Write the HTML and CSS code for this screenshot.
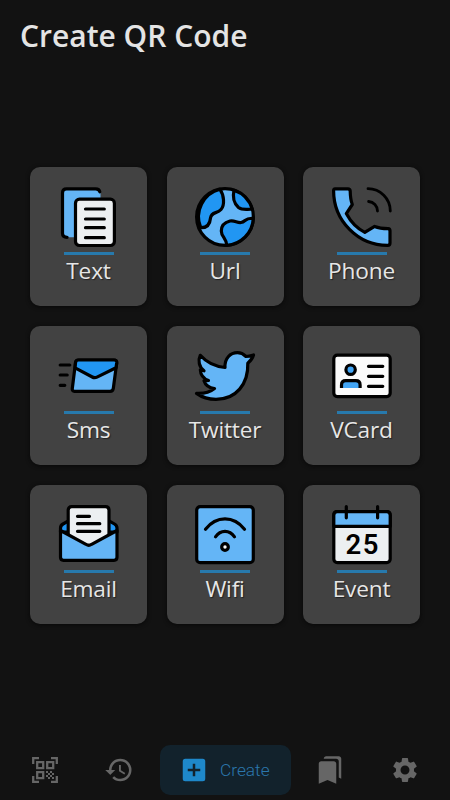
FILE: index.html
```html
<!DOCTYPE html>
<html lang="en">
<head>
<meta charset="utf-8">
<title>Create QR Code</title>
<link rel="stylesheet" href="styles.css">
</head>
<body>
<div class="app">
  <header class="header"><h1 class="title">Create QR Code</h1></header>
  <main class="grid">
    <button class="card">
      <svg class="icon" viewBox="0 0 60 60">
        <path class="light ns" d="M8 1.800h29.500q4 0 4 4v44.500H8.700q-4.600 0-4.600-4V5.800q0-4 3.900-4z"/>
        <path class="none" d="M40.800 4.800q-.5-3-4.200-3H7.500q-4 0-4 4v40.500q0 4 4.600 4"/>
        <rect class="paper" x="16.500" y="12.200" width="38.900" height="46.300" rx="4"/>
        <path d="M26.500 22h18.800M26.500 32h18.800M26.500 40.700h18.800M26.500 50.700h18.800"/>
      </svg>
      <span class="line"></span><span class="label">Text</span>
    </button>
    <button class="card">
      <svg class="icon" viewBox="0 0 60 60">
        <circle class="light" cx="30" cy="30" r="28.400"/>
        <path class="deep" d="M25 2.300C29 8 30 18 26 22.500C22 27 16.500 24.500 15.500 31C15 37 12.500 41 5.700 40.700A28.400 28.400 0 0 1 25 2.300z"/>
        <path class="deep" d="M39 3.200C37.500 10 39 16.500 43.500 20.500C47.500 23.500 51.500 22 57.300 22.300A28.400 28.400 0 0 0 39 3.200z"/>
        <path class="deep" d="M58.300 31.300C49.500 30.500 51 35 46 35.500C42 36 39.500 33 35 34C29 35.500 26.300 39 26.300 44C26.300 50 31.500 51 31.700 58.300A28.400 28.400 0 0 0 58.300 31.300z"/>
      </svg>
      <span class="line"></span><span class="label">Url</span>
    </button>
    <button class="card">
      <svg class="icon" viewBox="0 0 60 60">
        <path class="light" d="M3 1.800H16Q18 1.800 18.200 4C18.300 9 18.500 13 20.300 17.500L14.300 26.600C18.500 34.500 25 41.500 32.800 45.400L42.600 39.400C47 41.200 51.500 41.600 56 41.600Q58 41.800 58 43.800V56Q58 58.400 55.700 58.400C26 58.500 1.600 34 1.600 3.800Q1.600 1.800 3 1.800z"/>
        <path class="none thin" d="M36 1.700A22.300 22.300 0 0 1 58.300 24M36.600 14.500A9.500 9.500 0 0 1 45.500 24"/>
      </svg>
      <span class="line"></span><span class="label">Phone</span>
    </button>
    <button class="card">
      <svg class="icon" viewBox="0 0 60 60">
        <path class="light" d="M19.500 14H55Q58 14 57.700 17L54.300 42.500Q53.900 45.300 51 45.300H15.500Q12.900 45.300 13.300 42.500L16.500 16.800Q16.900 14 19.500 14z"/>
        <path class="deep" d="M19.500 14H55Q58 14 57.700 17L57 21.800L38 31.100Q35.500 32.300 33.300 31L16.100 21.800L16.500 16.800Q16.900 14 19.500 14z"/>
        <path d="M1.200 19h9.600M1.200 29h7M1.200 39.300h4.600"/>
      </svg>
      <span class="line"></span><span class="label">Sms</span>
    </button>
    <button class="card">
      <svg class="icon" viewBox="0 0 60 60">
        <path class="light" d="M5.300 9.300C12 17 20 20.500 30 21.500C29.500 12.500 35 6.700 42.500 6.700C46.500 6.700 49 8.500 51 10.500C53.500 10.500 56 9.800 58.500 9C57.500 12.500 55.500 15 52.800 17.300C53.500 38 41 53.400 21 53.400C13 53.400 6.500 51 1.500 47.400C8 47.800 14.500 46.500 19.500 42.500C14 42 10.500 39.500 9 34.800C10.500 35 12 34.800 13.500 34.500C8 32.500 5.500 28.500 5.300 23.800L9 24.800C4 21 2.800 14.500 5.300 9.300z"/>
      </svg>
      <span class="line"></span><span class="label">Twitter</span>
    </button>
    <button class="card">
      <svg class="icon" viewBox="0 0 60 60">
        <rect class="white" x="1.800" y="9.200" width="56.400" height="41.400" rx="3.500"/>
        <circle class="mid" cx="18.600" cy="23.700" r="4.700"/>
        <path class="mid ns" d="M9.500 42v-3q0-4.300 4.300-4.300h10q4.300 0 4.300 4.300v3z"/>
        <path class="none butt" d="M9.500 42v-3q0-4.300 4.300-4.300h10q4.300 0 4.300 4.300v3"/>
        <path d="M36.500 20.300h14.300M36.500 30.300h14.300M36.500 40.300h14.300"/>
      </svg>
      <span class="line"></span><span class="label">VCard</span>
    </button>
    <button class="card">
      <svg class="icon" viewBox="0 0 60 60">
        <path class="deep" d="M9.500 15.800L4 19Q1.500 20.500 1.500 23V27H58V23Q58 20.500 55.500 19L50 15.800z"/>
        <path class="paper" d="M9.200 32V5.200Q9.200 1.700 12.700 1.700H46.500Q50 1.700 50 5.200V32L30 42z"/>
        <path class="light" d="M1.500 25.500L27 39.300Q29.800 41.200 32.600 39.300L58 25.500V52.300Q58 55.300 55 55.300H4.500Q1.500 55.300 1.500 52.300z"/>
        <path d="M18.500 11.300h12M18.500 18.700h22.300M18.500 26.300h22.300"/>
      </svg>
      <span class="line"></span><span class="label">Email</span>
    </button>
    <button class="card">
      <svg class="icon" viewBox="0 0 60 60">
        <rect class="light" x="1.700" y="1.700" width="56.600" height="56" rx="3.500"/>
        <path class="none" d="M10.500 24.200C21.500 10.500 38.500 10.500 49.500 24.200M20.500 31.800C25.500 24.500 34.500 24.500 39.500 31.800"/>
        <circle class="white" cx="30" cy="42" r="3.300"/>
      </svg>
      <span class="line"></span><span class="label">Wifi</span>
    </button>
    <button class="card">
      <svg class="icon" viewBox="0 0 60 60">
        <rect class="paper" x="1.800" y="6.700" width="56.400" height="50.900" rx="3.500"/>
        <path class="light" d="M1.800 21.300V10.200Q1.800 6.700 5.300 6.700H54.700Q58.200 6.700 58.200 10.200V21.300z"/>
        <path d="M14.300 1.500V12.800M45.600 1.500V12.800"/>
        <text class="day" x="13.500" y="49" textLength="33" lengthAdjust="spacing">25</text>
      </svg>
      <span class="line"></span><span class="label">Event</span>
    </button>
  </main>
  <nav class="nav">
    <a class="tab">
      <svg class="qr" viewBox="0 0 26 26">
        <path class="st" d="M1.200 7V1.200H7M19 1.200h5.800V7M24.800 19v5.800H19M7 24.800H1.200V19M5.200 5.200h6v6h-6zM15.200 5.200h6v6h-6zM5.200 15.200h6v6h-6z"/>
        <path d="M14 14h2v2h-2zM18 14h2v2h-2zM16 16h2v2h-2zM20 16h2v2h-2zM14 18h2v2h-2zM18 18h2v2h-2zM16 20h2v2h-2zM20 20h2v2h-2z"/>
      </svg>
    </a>
    <a class="tab">
      <svg class="glyph" viewBox="0 0 24 24"><path d="M13 3a9 9 0 0 0-9 9H1l3.890 3.890.070.140L9 12H6c0-3.870 3.130-7 7-7s7 3.130 7 7-3.130 7-7 7c-1.930 0-3.680-.79-4.940-2.060l-1.420 1.420A8.950 8.950 0 0 0 13 21a9 9 0 0 0 0-18zm-1 5v5l4.280 2.540.72-1.210-3.500-2.080V8H12z"/></svg>
    </a>
    <a class="tab active">
      <svg class="glyph" viewBox="0 0 24 24"><path d="M19 3H5a2 2 0 0 0-2 2v14a2 2 0 0 0 2 2h14a2 2 0 0 0 2-2V5a2 2 0 0 0-2-2zm-2 10h-4v4h-2v-4H7v-2h4V7h2v4h4v2z"/></svg>
      <span class="tab-label">Create</span>
    </a>
    <a class="tab">
      <svg class="glyph" viewBox="0 0 24 24"><path d="M19 18l2 1V3c0-1.100-.9-2-2-2H8.990C7.890 1 7 1.900 7 3h10c1.100 0 2 .9 2 2v13zM15 5H5c-1.100 0-2 .9-2 2v16l7-3 7 3V7c0-1.100-.9-2-2-2z"/></svg>
    </a>
    <a class="tab">
      <svg class="glyph" viewBox="0 0 24 24"><path d="M19.140 12.940c.04-.3.060-.61.060-.94 0-.32-.02-.64-.07-.94l2.030-1.580a.49.49 0 0 0 .12-.61l-1.920-3.320a.488.488 0 0 0-.59-.22l-2.390.96c-.5-.38-1.030-.7-1.620-.94l-.36-2.540a.484.484 0 0 0-.48-.41h-3.840c-.24 0-.43.17-.47.41l-.36 2.540c-.59.24-1.130.57-1.620.94l-2.390-.96c-.22-.08-.47 0-.59.22L2.740 8.870c-.12.21-.08.47.12.61l2.030 1.580c-.05.3-.09.63-.09.94s.02.64.07.94l-2.030 1.580a.49.49 0 0 0-.12.61l1.920 3.320c.12.22.37.29.59.22l2.390-.96c.5.38 1.030.7 1.620.94l.36 2.540c.05.24.24.41.48.41h3.840c.24 0 .44-.17.47-.41l.36-2.540c.59-.24 1.130-.56 1.620-.94l2.390.96c.22.08.47 0 .59-.22l1.920-3.320c.12-.22.070-.47-.12-.61l-2.010-1.580zM12 15.600A3.610 3.610 0 0 1 8.400 12c0-1.980 1.620-3.600 3.600-3.600s3.600 1.620 3.600 3.600-1.620 3.600-3.600 3.600z"/></svg>
    </a>
  </nav>
</div>
</body>
</html>
```
FILE: styles.css
```css
* { box-sizing: border-box; }
body {
  margin: 0;
  background: #121212;
  color: #e4e4e4;
  font-family: "Open Sans", "Noto Sans", sans-serif;
}
.app {
  height: 800px;
  display: flex;
  flex-direction: column;
  overflow: hidden;
}
.header { height: 167px; padding: 15px 20px 0; }
.title {
  margin: 0;
  font-size: 30px;
  line-height: 42px;
  font-weight: 600;
  white-space: nowrap;
}
.grid {
  display: grid;
  grid-template-columns: repeat(3, 117px);
  grid-auto-rows: 139px;
  column-gap: 19.5px;
  row-gap: 19.8px;
  padding: 0 30px;
}
.card {
  display: flex;
  flex-direction: column;
  align-items: center;
  padding: 20px 0 0;
  border: 0;
  border-radius: 10px;
  background: #424242;
  color: #e6e6e6;
  font: inherit;
  box-shadow: 0 1px 4px #080808;
}
.icon {
  width: 60px;
  height: 60px;
  flex: none;
  overflow: visible;
  stroke: #000;
  stroke-width: 3.2px;
  stroke-linecap: round;
  stroke-linejoin: round;
}
.light { fill: #64b5f6; }
.deep { fill: #2196f3; }
.mid { fill: #42a5f5; }
.paper { fill: #eceff1; }
.white { fill: #fafafa; }
.none { fill: none; }
.ns { stroke: none; }
.thin { stroke-width: 2.8px; }
.butt { stroke-linecap: butt; }
.day {
  font: 600 27.5px Roboto, sans-serif;
  fill: #000;
  stroke: none;
}
.line {
  width: 50px;
  height: 3px;
  margin-top: 5px;
  background: #2779ac;
  flex: none;
}
.label {
  font-size: 22.7px;
  font-weight: 400;
  line-height: 32px;
  letter-spacing: -0.2px;
  text-shadow: 1px 1px 1px #222;
}
.nav {
  margin-top: auto;
  height: 60px;
  padding: 5px 8px;
  display: grid;
  grid-template-columns: 74px 78px 131px 78px 73px;
  color: #666;
}
.tab {
  display: flex;
  align-items: center;
  justify-content: center;
  height: 50px;
}
.tab:nth-child(2) { padding-right: 4px; }
.tab:last-child { padding-right: 2px; }
.active {
  border-radius: 10px;
  background: #12222c;
  color: #1e88ca;
  justify-content: flex-start;
  padding-left: 19px;
  gap: 11px;
}
.glyph { width: 30px; height: 30px; fill: currentColor; }
.qr { width: 26px; height: 26px; fill: currentColor; }
.st { fill: none; stroke: currentColor; stroke-width: 2.3; }
.tab-label { font: 350 17.3px Roboto, sans-serif; color: #2b77ad; }
```
